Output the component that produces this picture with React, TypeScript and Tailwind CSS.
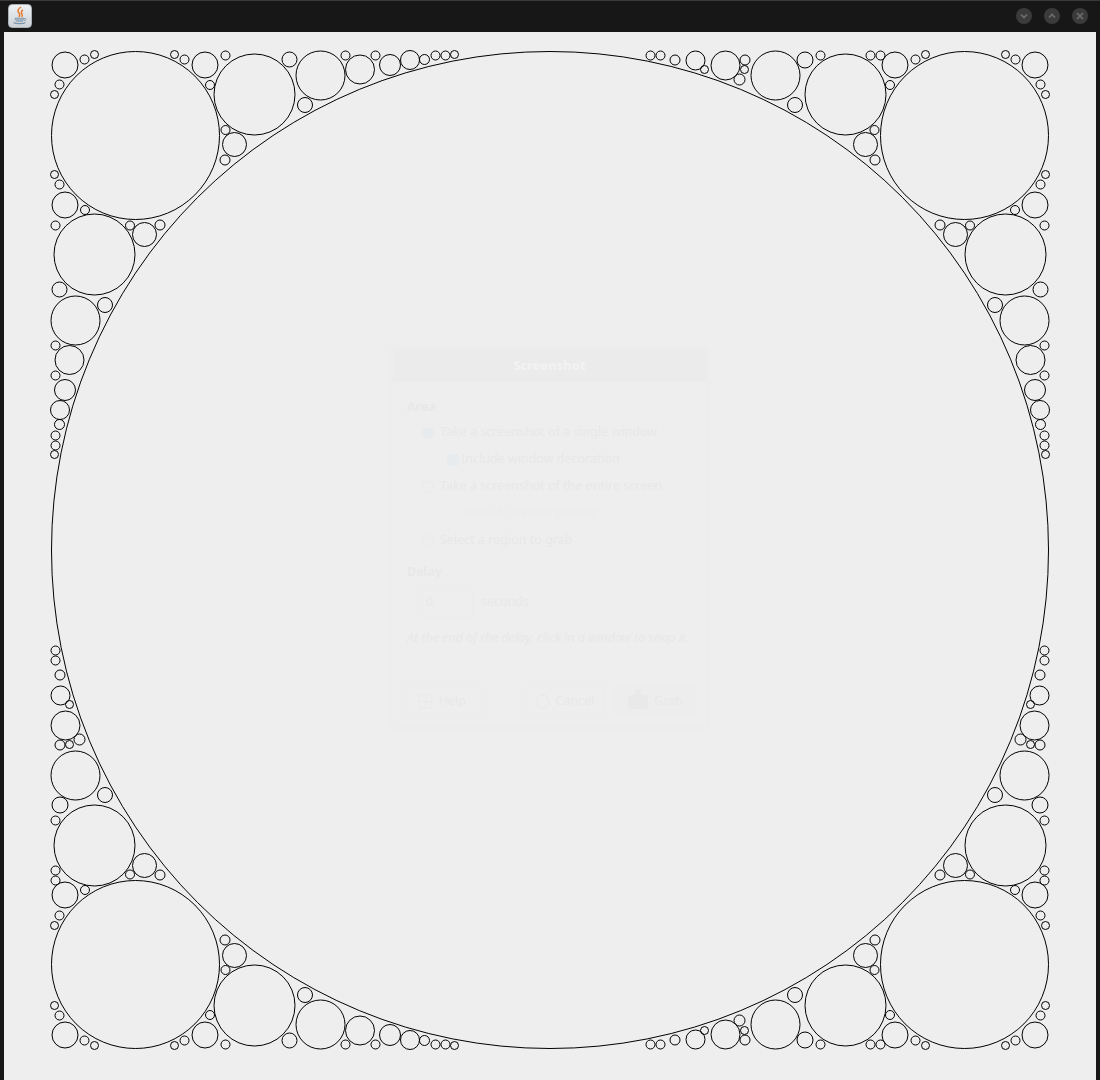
import type { ReactNode } from "react";
import { useMemo } from "react";

type Circle = [number, number, number];

// one band along the top edge, the other three edges are transforms of it
const topBand: Circle[] = [
  [135.5, 135.5, 84],
  [65, 65, 13],
  [84.5, 59.5, 4.5],
  [94.5, 54.5, 4],
  [174.5, 54.5, 4],
  [184.5, 59.5, 4.5],
  [205, 65, 13],
  [225.5, 55.5, 4.5],
  [210, 85, 4.5],
  [225.5, 130, 4.5],
  [234.5, 144.5, 12],
  [225, 160, 5],
  [254.5, 94.5, 40.5],
  [289.5, 59.5, 7.5],
  [320.5, 75.5, 24.5],
  [305, 105, 7.5],
  [345.5, 55.5, 4.5],
  [360, 69.5, 14.5],
  [375.5, 55.5, 4.5],
  [390, 65, 10.5],
  [410, 60, 9.5],
  [424.5, 59.5, 5],
  [435.5, 55.5, 4.5],
  [445.5, 55.5, 4.5],
  [454.5, 54.5, 4],
  [650.5, 55.5, 4.5],
  [660.5, 55.5, 4.5],
  [675, 60, 5],
  [695.5, 60.5, 9.5],
  [704.5, 69.5, 4],
  [725.5, 65.5, 14.5],
  [745, 60, 5],
  [744.5, 69.5, 4],
  [739.5, 79.5, 5.5],
  [775.5, 75.5, 24.5],
  [805, 60, 8],
  [820.5, 55.5, 4.5],
  [795, 105, 7.5],
  [845.5, 94.5, 40.5],
  [870.5, 55.5, 4.5],
  [880.5, 55.5, 4.5],
  [895, 65, 13],
  [915.5, 59.5, 4.5],
  [925.5, 54.5, 4],
  [890, 85, 4.5],
  [874.5, 130, 4.5],
  [865.5, 144.5, 12],
  [875, 160, 5],
  [964.5, 135.5, 84],
  [1035, 65, 13],
  [1015.5, 59.5, 4.5],
  [1005.5, 54.5, 4],
];

function PackedCircles() {
  const circles = useMemo(() => {
    const all: Circle[] = [[550, 550, 498.5]];
    for (const [x, y, r] of topBand) {
      all.push([x, y, r], [x, 1100 - y, r], [y, x, r], [1100 - y, x, r]);
    }
    // the corners map onto each other, no need to draw them twice
    const seen = new Set<string>();
    return all.filter((c) => {
      const key = c.join(",");
      if (seen.has(key)) return false;
      seen.add(key);
      return true;
    });
  }, []);
  return (
    <svg
      className="absolute left-0 top-0"
      width={1100}
      height={1080}
      viewBox="0 0 1100 1080"
      fill="none"
      stroke="#000"
      strokeWidth={1}
    >
      {circles.map(([x, y, r], i) => (
        <circle key={i} cx={x} cy={y} r={r} />
      ))}
    </svg>
  );
}

function JavaIcon() {
  return (
    <div className="w-6 h-6 rounded-[4px] bg-gradient-to-b from-[#eef1f4] to-[#cdd3d9] border border-[#aab0b6] flex items-center justify-center">
      <svg width={20} height={20} viewBox="0 0 20 20" fill="none">
        <path d="M11 1c-3 2-4 4-2 6 1 1 1 2 0 4M13 4c-2 1-2 3-1 4 .6 1 .4 2-.4 3" stroke="#e8792b" strokeWidth={1.5} />
        <path d="M5 12h9c0 2-1 3-2 3.500H7C6 15 5 14 5 12z" fill="#9fb2c4" stroke="#7d93a8" strokeWidth={0.6} />
        <path d="M14 12.500h1.500c1 0 1 2-1.500 2" stroke="#7d93a8" strokeWidth={0.8} />
        <path d="M3.500 16.500c2 1.500 10 1.500 12 0" stroke="#7d93a8" strokeWidth={1.1} />
      </svg>
    </div>
  );
}

function TitleButton({ path }: { path: string }) {
  return (
    <div className="w-4 h-4 rounded-full bg-[#3b3b3b] flex items-center justify-center">
      <svg width={10} height={10} viewBox="0 0 10 10" fill="none" stroke="#6e6e6e" strokeWidth={1.6}>
        <path d={path} />
      </svg>
    </div>
  );
}

function GhostRadio({ label, color }: { label: string; color: string }) {
  return (
    <div className="h-[27px] flex items-center gap-[6px] pl-[15px]">
      <span className={`w-3 h-3 rounded-full shrink-0 ${color}`} />
      <span>{label}</span>
    </div>
  );
}

function GhostButton({ label, filled, icon }: { label: string; filled?: boolean; icon: ReactNode }) {
  return (
    <div
      className={`h-[32px] flex items-center justify-center gap-[6px] ${
        filled ? "w-[83px] bg-[#ededed]" : "w-[80px] border border-[#ececec]"
      }`}
    >
      {icon}
      <span>{label}</span>
    </div>
  );
}

// very faint dialog left over on top of the drawing
function GhostDialog() {
  return (
    <div className="absolute left-[389px] top-[346px] w-[321px] h-[384px] bg-[#ecedec] p-1 rounded-[2px]">
      <div className="h-[32px] bg-[#ebebeb] flex items-center justify-center text-[#f3f3f3] font-bold text-[13px]">
        Screenshot
      </div>
      <div className="h-[344px] bg-[#eeeeee] text-[#e8e8e8] text-[12.5px] flex flex-col px-[14px] pt-[13px]">
        <div className="font-bold h-[24px] flex items-center">Area</div>
        <div className="flex flex-col">
          <GhostRadio label="Take a screenshot of a single window" color="bg-[#e8ebee]" />
          <div className="h-[27px] flex items-center gap-[2px] pl-[40px]">
            <span className="w-3 h-3 rounded-sm bg-[#e8ebee]" />
            <span>Include window decoration</span>
          </div>
          <GhostRadio label="Take a screenshot of the entire screen" color="border border-[#ebebeb]" />
          <div className="h-[27px] flex items-center pl-[58px] text-[#ececec]">Include mouse pointer</div>
          <GhostRadio label="Select a region to grab" color="border border-[#ebebeb]" />
        </div>
        <div className="font-bold h-[24px] flex items-center mt-[6px]">Delay</div>
        <div className="flex items-center gap-[8px] pl-[15px] mt-[3px] h-[30px]">
          <div className="w-[51px] h-[30px] border border-[#ececec] flex items-center pl-[3px]">0</div>
          <span>seconds</span>
        </div>
        <div className="italic mt-[9px] h-[24px] flex items-center whitespace-nowrap">
          At the end of the delay, click in a window to snap it.
        </div>
        <div className="flex items-center mt-[35px] -mx-[5px]">
          <GhostButton
            label="Help"
            icon={
              <svg width={15} height={15} viewBox="0 0 15 15" fill="none" stroke="#e9e9e9">
                <rect x={1} y={1} width={13} height={13} />
                <path d="M7.500 1v13M1 7.500h13" />
              </svg>
            }
          />
          <div className="w-[43px]" />
          <GhostButton
            label="Cancel"
            icon={
              <svg width={15} height={15} viewBox="0 0 15 15" fill="none" stroke="#e9e9e9">
                <circle cx={7.500} cy={7.500} r={6.500} />
              </svg>
            }
          />
          <div className="w-[10px]" />
          <GhostButton
            label="Grab"
            filled
            icon={
              <svg width={20} height={20} viewBox="0 0 20 20" fill="#e9e9e9" className="-mt-[4px]">
                <rect x={0} y={6} width={20} height={14} rx={2} />
                <rect x={7} y={1} width={6} height={5} />
              </svg>
            }
          />
        </div>
      </div>
    </div>
  );
}

export default function App() {
  return (
    <div className="relative w-[1100px] h-[1080px] overflow-hidden flex flex-col bg-[#171717] font-['Noto_Sans',sans-serif]">
      <div className="h-8 shrink-0 flex items-center justify-between pl-2 pr-3 pb-[1px] border-t border-[#3a3a3a]">
        <JavaIcon />
        <div className="flex items-center gap-3">
          <TitleButton path="M2 3.500l3 3 3-3" />
          <TitleButton path="M2 6.500l3-3 3 3" />
          <TitleButton path="M2 2l6 6M8 2l-6 6" />
        </div>
      </div>
      <div className="flex-1 mx-1 bg-[#eeeeee]" />
      <GhostDialog />
      <PackedCircles />
    </div>
  );
}
